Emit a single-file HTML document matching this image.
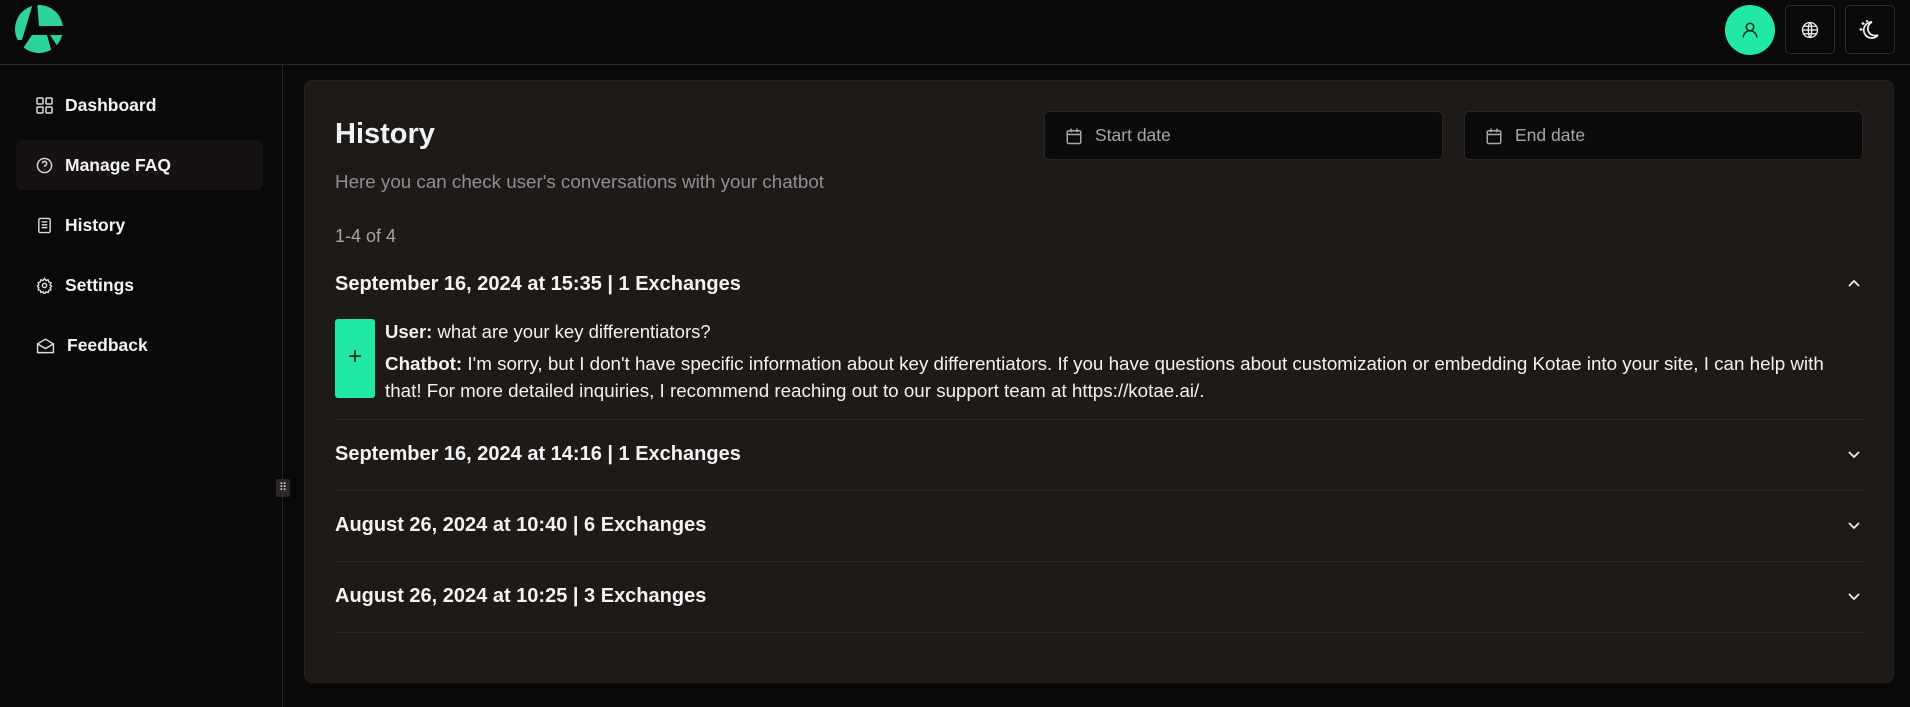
<!DOCTYPE html>
<html><head><meta charset="utf-8"><style>
*{box-sizing:border-box;margin:0;padding:0}
body{width:1910px;height:707px;background:#0a0909;font-family:"Liberation Sans",sans-serif;color:#f2f2f2;position:relative;overflow:hidden}
.hdr{position:absolute;left:0;top:0;width:1910px;height:65px;border-bottom:1px solid #2a2726}
.side{position:absolute;left:0;top:65px;width:283px;height:642px;border-right:1px solid #2a2726}
.nav{position:absolute;left:16px;width:247px;height:50px;border-radius:6px;display:flex;align-items:center;padding-left:20px;font-size:17.5px;font-weight:bold;color:#f4f4f4}
.nav svg{margin-right:12px}
.card{position:absolute;left:304px;top:80px;width:1590px;height:603px;background:#1e1a18;border-radius:8px;border:1px solid #262221}
.abs{position:absolute;white-space:nowrap}
.date{position:absolute;top:111px;height:49px;width:399px;background:#0b0a0a;border:1px solid #2a2726;border-radius:5px;display:flex;align-items:center;padding-left:20px;font-size:17.5px;color:#a7a7a7}
.date svg{margin-right:12px}
.row{font-size:20px;font-weight:bold;color:#f4f4f4;left:335px}
.sep{position:absolute;left:335px;width:1528px;height:1px;background:#2c2827}
.btn{position:absolute;top:5px;width:50px;height:49px;border:1px solid #2e2b2a;border-radius:5px;display:flex;align-items:center;justify-content:center}
</style></head><body>
<div class="hdr">
<svg class="abs" style="left:0;top:0" width="80" height="60" viewBox="0 0 80 60"><defs><clipPath id="c"><circle cx="39" cy="29" r="24"/></clipPath></defs><g clip-path="url(#c)" fill="#2ed39a"><polygon points="0,0 34,0 22,40 0,40"/><polygon points="37,0 70,0 70,26 39,26"/><polygon points="32,35 47,35 54,60 15,60"/><polygon points="50,35 70,35 58,47"/></g></svg>
<div class="abs" style="left:1725px;top:5px;width:50px;height:50px;border-radius:50%;background:#21e8a3;display:flex;align-items:center;justify-content:center"><svg width="18" height="18" viewBox="0 0 24 24" fill="none" stroke="#0b2a20" stroke-width="2"><circle cx="12" cy="8" r="5"/><path d="M3 22a9 9 0 0 1 18 0"/></svg></div>
<div class="btn" style="left:1785px"><svg width="18" height="18" viewBox="0 0 24 24" fill="none" stroke="#eee" stroke-width="1.8"><circle cx="12" cy="12" r="10"/><path d="M2 12h20M12 2c3 3 3 17 0 20M12 2c-3 3-3 17 0 20M4 7h16M4 17h16"/></svg></div>
<div class="btn" style="left:1845px"><svg width="26" height="26" viewBox="0 0 26 26" fill="none" stroke="#eee" stroke-width="1.8"><path d="M15 5a8 8 0 1 0 6 13a7 7 0 0 1-6-13z"/><path d="M6 5v3M4.5 6.5h3M4 11v3M2.5 12.5h3M10 3v2M9 4h2" stroke-width="1.3"/></svg></div>
</div>
<div class="side">
<div class="nav" style="top:15px"><svg width="17" height="17" viewBox="0 0 17 17" fill="none" stroke="#ddd" stroke-width="1.5"><rect x="1" y="1" width="6" height="6" rx="1"/><rect x="10" y="1" width="6" height="6" rx="1"/><rect x="1" y="10" width="6" height="6" rx="1"/><rect x="10" y="10" width="6" height="6" rx="1"/></svg>Dashboard</div>
<div class="nav" style="top:75px;background:#151211"><svg width="17" height="17" viewBox="0 0 24 24" fill="none" stroke="#ddd" stroke-width="2"><circle cx="12" cy="12" r="10"/><path d="M9 9a3 3 0 1 1 4 3c-1 .5-1 1-1 2M12 17.5v.5"/></svg>Manage FAQ</div>
<div class="nav" style="top:135px"><svg width="17" height="17" viewBox="0 0 24 24" fill="none" stroke="#ddd" stroke-width="2"><rect x="4" y="2" width="16" height="20" rx="2"/><path d="M8 7h8M8 11h8M8 15h8"/></svg>History</div>
<div class="nav" style="top:195px"><svg width="17" height="17" viewBox="0 0 24 24" fill="none" stroke="#ddd" stroke-width="2"><circle cx="12" cy="12" r="3"/><path d="M12 2l2 3 3-1 1 3 3 1-1 3 2 2-2 2 1 3-3 1-1 3-3-1-2 3-2-3-3 1-1-3-3-1 1-3-2-2 2-2-1-3 3-1 1-3 3 1z"/></svg>Settings</div>
<div class="nav" style="top:255px"><svg width="19" height="17" viewBox="0 0 24 20" fill="none" stroke="#ddd" stroke-width="1.8"><path d="M2 8l10-6 10 6v11H2z M2 8l10 6 10-6"/></svg>Feedback</div>
<div class="abs" style="left:276px;top:414px;width:14px;height:18px;background:#2a2726;border-radius:2px;color:#ddd;font-size:11px;text-align:center;line-height:18px">⠿</div>
</div>
<div class="card"></div>
<div class="abs" style="left:335px;top:118px;font-size:29px;font-weight:bold">History</div>
<div class="abs" style="left:335px;top:171px;font-size:18.8px;color:#8e8e93">Here you can check user's conversations with your chatbot</div>
<div class="abs" style="left:335px;top:226px;font-size:18px;color:#a5a5a5">1-4 of 4</div>
<div class="date" style="left:1044px"><svg width="18" height="18" viewBox="0 0 24 24" fill="none" stroke="#a7a7a7" stroke-width="2"><rect x="3" y="5" width="18" height="17" rx="2"/><path d="M3 10h18M8 2v5M16 2v5"/></svg>Start date</div>
<div class="date" style="left:1464px"><svg width="18" height="18" viewBox="0 0 24 24" fill="none" stroke="#a7a7a7" stroke-width="2"><rect x="3" y="5" width="18" height="17" rx="2"/><path d="M3 10h18M8 2v5M16 2v5"/></svg>End date</div>
<div class="abs row" style="top:273px">September 16, 2024 at 15:35 | 1 Exchanges</div>
<svg class="abs" style="left:1847px;top:277px" width="14" height="14" viewBox="0 0 14 14" fill="none" stroke="#eee" stroke-width="1.8"><path d="M2 9l5-5 5 5"/></svg>
<div class="abs" style="left:335px;top:319px;width:40px;height:79px;background:#21e8a3;border-radius:3px;color:#0b2a20;font-size:24px;text-align:center;line-height:76px">+</div>
<div class="abs" style="left:385px;top:321px;font-size:18.5px"><b>User:</b> what are your key differentiators?</div>
<div class="abs" style="left:385px;top:350px;font-size:18.8px;line-height:27px"><b>Chatbot:</b> I'm sorry, but I don't have specific information about key differentiators. If you have questions about customization or embedding Kotae into your site, I can help with<br>that! For more detailed inquiries, I recommend reaching out to our support team at https://kotae.ai/.</div>
<div class="sep" style="top:419px"></div>
<div class="abs row" style="top:443px">September 16, 2024 at 14:16 | 1 Exchanges</div>
<svg class="abs" style="left:1847px;top:447px" width="14" height="14" viewBox="0 0 14 14" fill="none" stroke="#eee" stroke-width="1.8"><path d="M2 5l5 5 5-5"/></svg>
<div class="sep" style="top:490px"></div>
<div class="abs row" style="top:514px">August 26, 2024 at 10:40 | 6 Exchanges</div>
<svg class="abs" style="left:1847px;top:518px" width="14" height="14" viewBox="0 0 14 14" fill="none" stroke="#eee" stroke-width="1.8"><path d="M2 5l5 5 5-5"/></svg>
<div class="sep" style="top:561px"></div>
<div class="abs row" style="top:585px">August 26, 2024 at 10:25 | 3 Exchanges</div>
<svg class="abs" style="left:1847px;top:589px" width="14" height="14" viewBox="0 0 14 14" fill="none" stroke="#eee" stroke-width="1.8"><path d="M2 5l5 5 5-5"/></svg>
<div class="sep" style="top:632px"></div>
</body></html>
